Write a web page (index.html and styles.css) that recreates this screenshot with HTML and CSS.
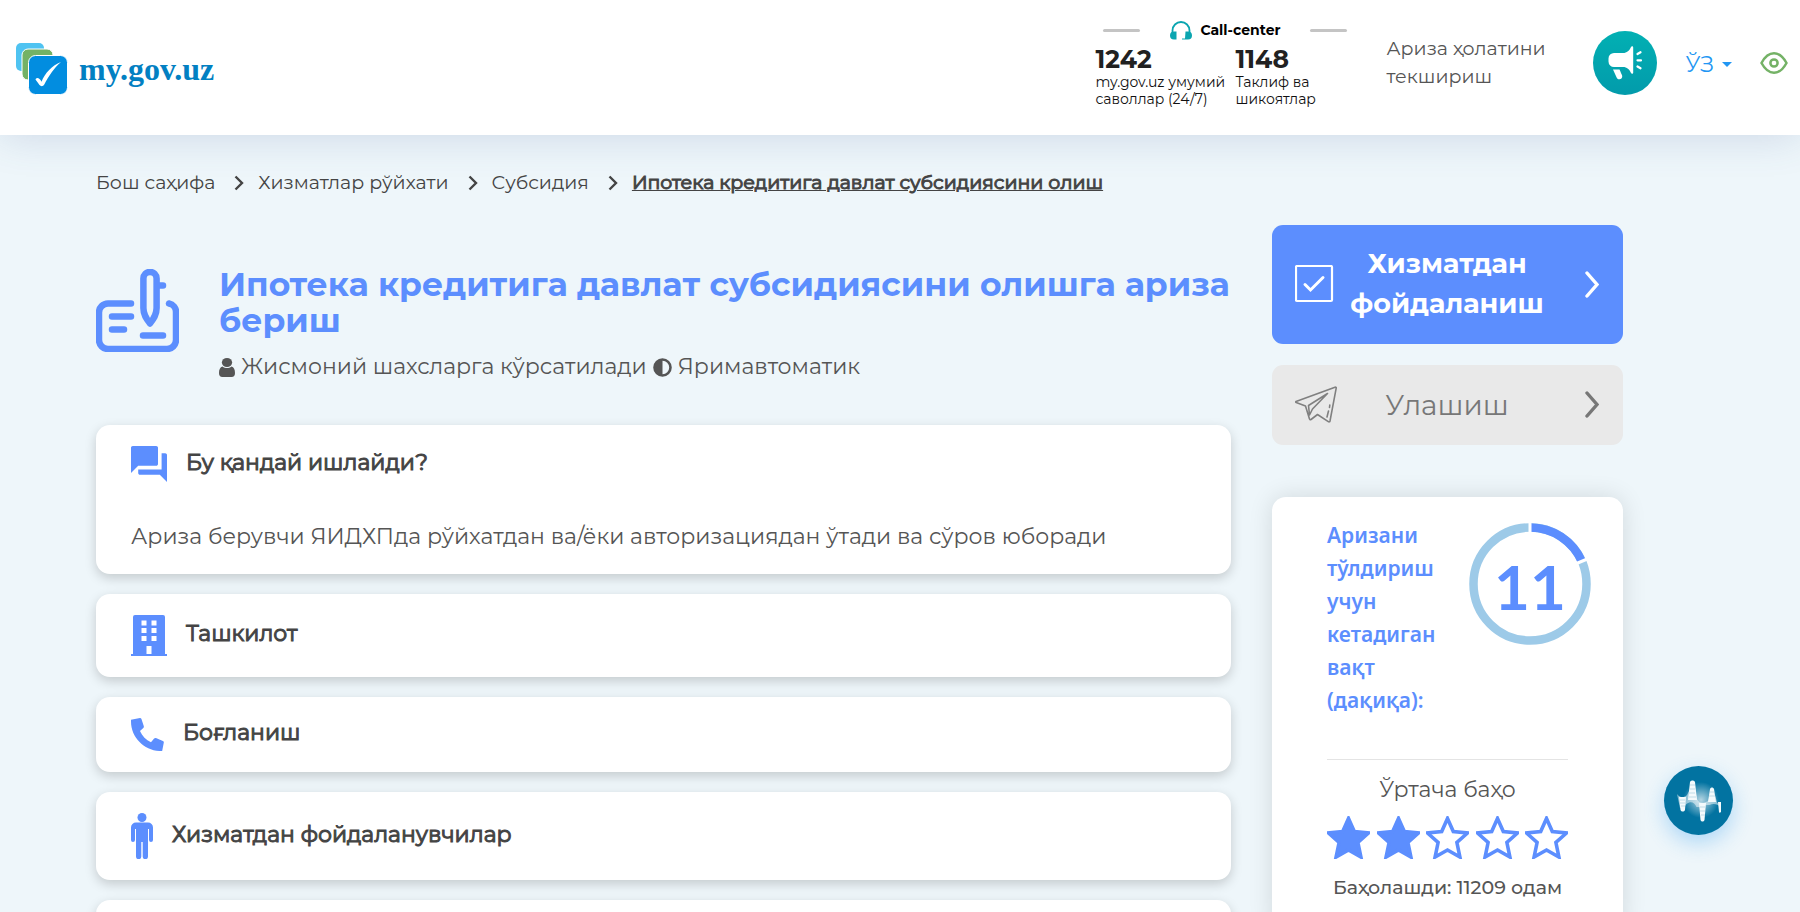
FILE: index.html
```html
<!DOCTYPE html>
<html lang="uz">
<head>
<meta charset="utf-8">
<meta name="viewport" content="width=device-width, initial-scale=1">
<title>my.gov.uz</title>
<link rel="stylesheet" href="styles.css">
</head>
<body>
<header class="header">
  <a class="logo" href="#">
    <svg width="52" height="52" viewBox="0 0 52 52" aria-hidden="true">
      <rect x="0" y="0" width="28" height="28" rx="5" fill="#4fc3f1"/>
      <rect x="6" y="6" width="31" height="31" rx="6" fill="#74b266" stroke="#fff"/>
      <rect x="12.500" y="12.500" width="39" height="39" rx="7" fill="#028de0" stroke="#fff"/>
      <path d="M19.500 36.500c1-2.500 4-2 6 2.200C29 30 36 22.500 45 19c-7 6-12 13.500-17 23-1 1.500-3.500 1.500-4.500 0z" fill="#fff"/>
    </svg>
    <span class="logo-text">my.gov.uz</span>
  </a>
  <div class="call">
    <div class="call-head">
      <span class="call-line"></span>
      <span class="call-title">
        <svg width="22" height="19" viewBox="0 0 22 19" aria-hidden="true">
          <path d="M2.500 12V9.500a8.500 8.500 0 0 1 17 0V12" fill="none" stroke="#0aa5b0" stroke-width="1.800"/>
          <path d="M6.500 10.500v8H4a4 4 0 0 1 0-8zM15.500 10.500v8H12v-1h3zM15.500 10.500H18a4 4 0 0 1 0 8h-2.500z" fill="#0aa5b0"/>
        </svg>
        Call-center
      </span>
      <span class="call-line"></span>
    </div>
    <div class="call-cols">
      <div><b class="call-num">1242</b><p class="call-text">my.gov.uz умумий<br>саволлар (24/7)</p></div>
      <div><b class="call-num">1148</b><p class="call-text">Таклиф ва<br>шикоятлар</p></div>
    </div>
  </div>
  <a class="status" href="#">Ариза ҳолатини<br>текшириш</a>
  <button class="horn" type="button" aria-label="Янгиликлар">
    <svg width="34" height="36" viewBox="0 0 34 36" aria-hidden="true" fill="#fff">
      <path d="M6 8h9c4 0 6.500-2.500 8-6 .5-1.200 2.200-1 2.200.5v25c0 1.500-1.700 1.700-2.200.5-1.500-3.500-4-6-8-6H6a5.500 5.500 0 0 1-5.500-5.500v-3A5.500 5.500 0 0 1 6 8z"/>
      <path d="M5 24.500h6.500c1 1.500 1 3 2.200 5 1.200 2.200.3 4.500-2 4.700-1.700.2-2.700-.6-3.200-2z"/>
      <path d="M29.500 9l3-1.800M29.500 15.300h3.500M29.500 21.500l3 1.800" fill="none" stroke="#fff" stroke-width="2.200" stroke-linecap="round"/>
    </svg>
  </button>
  <button class="lang" type="button">ЎЗ <span class="caret"></span></button>
  <button class="eye" type="button" aria-label="Махсус имкониятлар">
    <svg width="28" height="22" viewBox="0 0 28 22" aria-hidden="true" fill="none" stroke="#74b266" stroke-width="2.500">
      <path d="M1.500 11C5 4.500 9 1.300 14 1.300S23 4.500 26.500 11C23 17.500 19 20.700 14 20.700S5 17.500 1.500 11z"/>
      <circle cx="14" cy="11" r="3.600"/>
    </svg>
  </button>
</header>

<main class="page">
  <nav class="crumbs">
    <a href="#">Бош саҳифа</a>
    <svg class="crumb-sep" viewBox="0 0 10 16"><path d="M1.500 1.500L8 8l-6.500 6.500"/></svg>
    <a href="#">Хизматлар рўйхати</a>
    <svg class="crumb-sep" viewBox="0 0 10 16"><path d="M1.500 1.500L8 8l-6.500 6.500"/></svg>
    <a href="#">Субсидия</a>
    <svg class="crumb-sep" viewBox="0 0 10 16"><path d="M1.500 1.500L8 8l-6.500 6.500"/></svg>
    <a class="current" href="#">Ипотека кредитига давлат субсидиясини олиш</a>
  </nav>

  <div class="columns">
    <div class="main">
      <div class="intro">
        <svg class="intro-icon" viewBox="0 0 83 83" aria-hidden="true" fill="none" stroke="#5c8efe" stroke-width="6.500" stroke-linecap="round" stroke-linejoin="round">
          <path d="M35 34.500H12a9 9 0 0 0-9 9V71a9 9 0 0 0 9 9h59a9 9 0 0 0 9-9V43a8.500 8.500 0 0 0-7-8.500"/>
          <path d="M47.400 9.500a6.500 6.500 0 0 1 13.200 0V39c0 7-3 11-6.600 15.500C50.400 50 47.400 46 47.400 39zM61 16.500h6M16 47.500h19M16 60.500h12M47 66.500h20"/>
        </svg>
        <div>
          <h1 class="title">Ипотека кредитига давлат субсидиясини олишга ариза бериш</h1>
          <p class="meta">
            <svg width="16" height="19" viewBox="0 0 14 19" preserveAspectRatio="none" fill="#555"><circle cx="7" cy="4.500" r="4.500"/><path d="M3 8.500c2.500 2 5.500 2 8 0 2 .8 3 3 3 6.500 0 2.500-1 4-3 4H3c-2 0-3-1.500-3-4 0-3.500 1-5.700 3-6.500z"/></svg>
            <span>Жисмоний шахсларга кўрсатилади</span>
            <svg width="19" height="19" viewBox="0 0 19 19"><circle cx="9.500" cy="9.500" r="8" fill="none" stroke="#555" stroke-width="2.600"/><path d="M9.500 1.500a8 8 0 0 0 0 16z" fill="#555"/></svg>
            <span>Яримавтоматик</span>
          </p>
        </div>
      </div>

      <div class="cards">
        <section class="card open">
          <h2><button class="card-head" type="button">
            <svg width="36" height="36" viewBox="2 2 20 20" fill="#5c8efe"><path d="M21 6h-2v9H6v2c0 .55.45 1 1 1h11l4 4V7c0-.55-.45-1-1-1zm-4 6V3c0-.55-.45-1-1-1H3c-.55 0-1 .45-1 1v14l4-4h10c.55 0 1-.45 1-1z"/></svg>
            <span>Бу қандай ишлайди?</span></button></h2>
          <p class="card-text">Ариза берувчи ЯИДХПда рўйхатдан ва/ёки авторизациядан ўтади ва сўров юборади</p>
        </section>
        <section class="card">
          <h2><button class="card-head" type="button">
            <svg width="36" height="41" viewBox="0 0 36 41"><path d="M4 0h28a2 2 0 0 1 2 2v37h2v2H0v-2h2V2a2 2 0 0 1 2-2z" fill="#5c8efe"/><path d="M10.500 5.500h5v5h-5zm10 0h5v5h-5zm-10 7.500h5v5h-5zm10 0h5v5h-5zm-10 8h5v5h-5zm10 0h5v5h-5zM15.500 31h5v8h-5z" fill="#fff"/></svg>
            <span>Ташкилот</span></button></h2>
        </section>
        <section class="card">
          <h2><button class="card-head" type="button">
            <svg width="33" height="33" viewBox="3 3 18 18" fill="#5c8efe"><path d="M3 3.900L7.900 3c.4 0 .7.200.8.500l1.300 4c.1.400 0 .8-.3 1L7.900 10.100c1.200 2.800 3.300 4.900 6 6.100l1.700-2c.3-.3.700-.4 1-.3l3.800 1.600c.4.200.6.500.5.900l-.9 4.600H18.500C10 20.500 3 13.500 3 4.900z"/></svg>
            <span>Боғланиш</span></button></h2>
        </section>
        <section class="card">
          <h2><button class="card-head" type="button">
            <svg width="22" height="46" viewBox="0 0 22 46" fill="#5c8efe"><circle cx="11" cy="4.500" r="4.500"/><path d="M5 9.500h12a5 5 0 0 1 5 5V27a2 2 0 0 1-4 0V16h-1v27.500a2.500 2.500 0 0 1-5.300 0V29h-1.400v14.500a2.500 2.500 0 0 1-5.300 0V16H4v11a2 2 0 0 1-4 0V14.500a5 5 0 0 1 5-5z"/></svg>
            <span>Хизматдан фойдаланувчилар</span></button></h2>
        </section>
        <section class="card"><h2><button class="card-head" type="button" aria-label="Батафсил"></button></h2></section>
      </div>
    </div>

    <aside class="side">
      <button class="action primary" type="button">
        <svg width="42" height="38" viewBox="0 0 42 38" fill="none" stroke="#fff"><rect x="1" y="1" width="36" height="35" rx="1" stroke-width="2.200"/><path d="M10 19.500l5.500 5.500L28 12.500" stroke-width="3" stroke-linecap="round"/></svg>
        <span>Хизматдан фойдаланиш</span>
        <svg class="chev" viewBox="0 0 14 27"><path d="M2 2l10 11.500L2 25"/></svg>
      </button>
      <button class="action share" type="button">
        <svg width="42" height="37" viewBox="0 0 42 37" fill="none" stroke="#808080" stroke-width="1.600" stroke-linejoin="round" stroke-linecap="round"><path d="M1 15.500L40 1.200c.8-.3 1.400.2 1.200 1L35 35c-.2.900-1 1-1.700.6L22.500 28.500l-6.500 5c-.7.400-1.300.2-1.500-.6L10.500 20 1.200 16.500c-.6-.2-.7-.7-.2-1zM14.500 29L13.500 19.500 32.500 7.500 17.500 23zM32 31l1.500-6M34.500 21.500l.3-2.500"/></svg>
        <span>Улашиш</span>
        <svg class="chev" viewBox="0 0 14 27"><path d="M2 2l10 11.500L2 25"/></svg>
      </button>
      <section class="stats">
        <div class="time">
          <p class="time-label">Аризани тўлдириш учун кетадиган вақт (дақиқа):</p>
          <div class="donut">
            <svg viewBox="0 0 122 122" aria-hidden="true" fill="none" stroke-width="8.500">
              <circle cx="61" cy="61" r="56.500" stroke="#9dcae8"/>
              <path d="M61 4.500A56.500 56.500 0 0 1 113 38.900" stroke="#5c8efe"/>
              <path d="M61 0v10M107.500 40.500l12-5" stroke="#fff" stroke-width="3"/>
            </svg>
            <span class="minutes">11</span>
          </div>
        </div>
        <div class="rating">
          <p class="rating-label">Ўртача баҳо</p>
          <div class="stars" role="img" aria-label="2 / 5">
            <svg class="star full" viewBox="0 0 43 43"><path d="M21.500 2.500l5.800 13 14.200 1.500-10.600 9.500 3 14.500-12.400-7-12.400 7 3-14.500L1.500 17l14.200-1.500z"/></svg>
            <svg class="star full" viewBox="0 0 43 43"><path d="M21.500 2.500l5.800 13 14.200 1.500-10.600 9.500 3 14.500-12.400-7-12.400 7 3-14.500L1.500 17l14.200-1.500z"/></svg>
            <svg class="star" viewBox="0 0 43 43"><path d="M21.500 2.500l5.800 13 14.200 1.500-10.600 9.500 3 14.500-12.400-7-12.400 7 3-14.500L1.500 17l14.200-1.500z"/></svg>
            <svg class="star" viewBox="0 0 43 43"><path d="M21.500 2.500l5.800 13 14.200 1.500-10.600 9.500 3 14.500-12.400-7-12.400 7 3-14.500L1.500 17l14.200-1.500z"/></svg>
            <svg class="star" viewBox="0 0 43 43"><path d="M21.500 2.500l5.800 13 14.200 1.500-10.600 9.500 3 14.500-12.400-7-12.400 7 3-14.500L1.500 17l14.200-1.500z"/></svg>
          </div>
          <p class="votes">Баҳолашди: 11209 одам</p>
        </div>
      </section>
    </aside>
  </div>
</main>

<button class="voice" type="button" aria-label="Овозли ёрдамчи">
  <svg width="44" height="42" viewBox="0 0 44 42" aria-hidden="true">
    <defs><radialGradient id="glow"><stop offset="0" stop-color="#fff" stop-opacity=".7"/><stop offset="1" stop-color="#fff" stop-opacity="0"/></radialGradient></defs>
    <circle cx="24" cy="20" r="18" fill="url(#glow)"/>
    <path d="M0 14c3 4 7 4 10 1l3-6h5l2 10c1.500 4 6 5 11 2l2-6h5l2 7c1 2 2 1.500 3.500 1v4c-3-3-7-4-11-2-3 0-6 0-8 2h-5c-2-5-6-6-10-3l-3 4H3z" fill="#fff" opacity=".5"/>
    <path d="M2 17h7l-1 13c-1 2-3.500 2-4.500 0zM13 2c1-2 4-2 5 0l2 18h-9zM22 23h7l-1.500 17c-1 2-3 2-4 0zM33 9c1-2 3-2 4 0l2 13h-8zM41 22h3v10c-1 1-2 1-2 0z" fill="#f4fafc"/>
    <path d="M3 20h5M3 23h5M4 26h4M13 5h5M13 9h5M12 13h6M12 17h7M23 27h5M23 31h5M24 35h4M33 12h4M32 16h6" stroke="#a9cfde" stroke-width=".7"/>
  </svg>
</button>
</body>
</html>
```
FILE: styles.css
```css
* { box-sizing: border-box; }
body {
  margin: 0;
  min-height: 100vh;
  overflow: hidden;
  background: #eef6fa;
  color: #444;
  font-family: Montserrat, Inter, sans-serif;
}
h1, h2, p { margin: 0; }
a { color: inherit; text-decoration: none; }
button {
  padding: 0;
  border: 0;
  background: none;
  color: inherit;
  font: inherit;
  cursor: pointer;
}
svg { display: block; flex: none; }

.header {
  display: flex;
  align-items: center;
  height: 135px;
  padding: 0 12px 10px 16px;
  background: #fff;
  box-shadow: 0 0 40px rgba(60, 90, 150, 0.2);
}
.logo {
  display: flex;
  align-items: center;
  gap: 11px;
  margin: 12px auto 0 0;
}
.logo-text {
  color: #0280c2;
  font: 700 32px/40px "Liberation Serif", serif;
}
.call { width: 262px; margin-right: 29px; padding-top: 3px; }
.call-head {
  display: flex;
  align-items: center;
  justify-content: space-between;
  padding: 0 10px 0 8px;
}
.call-line { width: 37px; height: 3px; border-radius: 2px; background: #c4c4c4; }
.call-title {
  display: flex;
  align-items: center;
  gap: 8px;
  color: #000;
  font-size: 14px;
  font-weight: 700;
  line-height: 18px;
}
.call-cols { display: grid; grid-template-columns: 140px 1fr; padding-top: 4px; }
.call-num { display: block; color: #212121; font-size: 25px; line-height: 30px; }
.call-text { color: #111; font-size: 14px; line-height: 17px; white-space: nowrap; }
.status { width: 207px; color: #555; font-size: 19px; line-height: 28px; }
.horn {
  display: grid;
  place-items: center;
  width: 64px;
  height: 64px;
  border-radius: 50%;
  background: linear-gradient(#02b0b3, #029bab);
}
.lang {
  display: flex;
  align-items: center;
  gap: 8px;
  margin: 0 28px;
  padding-top: 3px;
  color: #2196f3;
  font-size: 22px;
}
.caret { border: 5px solid transparent; border-top-color: #2196f3; border-bottom: 0; }

.page { padding: 34px 177px 0 96px; }
.crumbs {
  display: flex;
  align-items: center;
  font-size: 19px;
  line-height: 28px;
}
.crumb-sep {
  width: 10px;
  height: 16px;
  margin: 0 14px 0 19px;
  fill: none;
  stroke: #444;
  stroke-width: 2.4;
}
.current { text-decoration: underline; -webkit-text-stroke: 1px; }

.columns {
  display: grid;
  grid-template-columns: minmax(0, 1fr) 351px;
  gap: 41px;
  padding-top: 28px;
}
.intro { display: flex; gap: 40px; padding-top: 41px; }
.intro-icon { width: 83px; height: 83px; margin-top: 3px; }
.intro > div { flex: 1; }
.title { color: #5c8efe; font-size: 33px; font-weight: 700; line-height: 36px; }
.meta {
  display: flex;
  align-items: center;
  gap: 6px;
  padding-top: 13px;
  color: #555;
  font-size: 22px;
  line-height: 32px;
}
.cards { display: grid; gap: 20px; padding-top: 42px; }
.card {
  padding: 21px 35px;
  border-radius: 14px;
  background: #fff;
  box-shadow: 0 4px 12px rgba(0, 0, 0, 0.18);
}
.card.open { padding-bottom: 20px; }
.card h2 { font-size: 22px; font-weight: 400; line-height: 28px; -webkit-text-stroke: 1px; }
.card-head { display: flex; align-items: center; gap: 19px; text-align: left; }
.card-head span { padding-bottom: 3px; }
.card-text {
  padding-top: 38px;
  color: #555;
  font-size: 22px;
  line-height: 34px;
}

.action {
  display: flex;
  align-items: center;
  width: 100%;
  min-height: 80px;
  padding: 19px 24px 20px 23px;
  border-radius: 11px;
}
.action span { flex: 1; line-height: 40px; }
.primary { margin-bottom: 21px; background: #5c8efe; color: #fff; font-size: 27px; font-weight: 700; }
.share { background: #e9e9e9; color: #777; font-size: 28px; }
.chev {
  width: 14px;
  height: 27px;
  margin-left: 28px;
  fill: none;
  stroke: currentColor;
  stroke-width: 3.4;
  stroke-linecap: round;
}
.stats {
  margin-top: 52px;
  padding: 22px 55px 30px;
  border-radius: 14px;
  background: #fff;
  box-shadow: 0 0 24px rgba(0, 0, 0, 0.12);
}
.time { display: flex; justify-content: space-between; margin-right: -23px; }
.time-label {
  width: 110px;
  color: #5c8efe;
  font: 600 21px/33px "Noto Sans", sans-serif;
}
.donut { display: grid; flex: none; width: 122px; height: 130px; }
.donut svg, .minutes { grid-area: 1 / 1; }
.donut svg { width: 122px; height: 122px; margin-top: 4px; }
.minutes {
  place-self: center;
  padding-top: 3px;
  color: #5c8efe;
  font: 700 62px/72px Lato, sans-serif;
}
.rating {
  margin-top: 42px;
  padding-top: 14px;
  border-top: 1px solid #e4e4e4;
  text-align: center;
}
.rating-label { color: #555; font-size: 22px; line-height: 32px; }
.stars { display: flex; justify-content: space-between; padding-top: 10px; }
.star { width: 43px; height: 43px; fill: none; stroke: #5c8efe; stroke-width: 3.6; }
.star.full { fill: #5c8efe; }
.votes { padding-top: 16px; color: #555; font-size: 19px; font-weight: 500; line-height: 26px; text-align: center; white-space: nowrap; }

.voice {
  position: fixed;
  right: 67px;
  bottom: 77px;
  display: grid;
  place-items: center;
  width: 69px;
  height: 69px;
  border-radius: 50%;
  background: #0273a1;
  box-shadow: 0 8px 20px rgba(33, 150, 243, 0.3);
}
```
